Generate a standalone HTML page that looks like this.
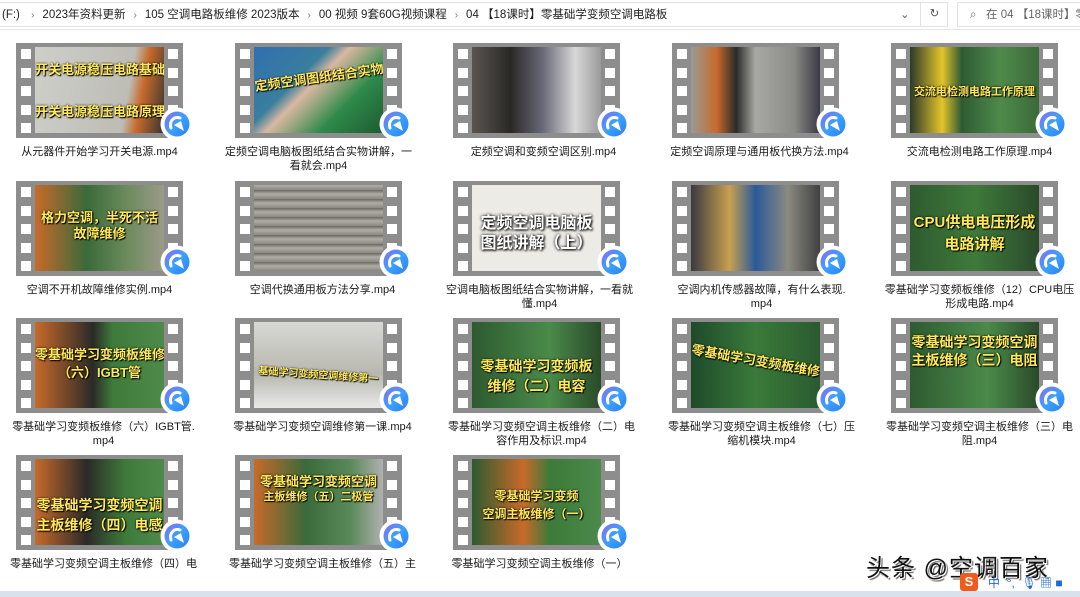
<!DOCTYPE html>
<html><head><meta charset="utf-8"><style>
*{margin:0;padding:0;box-sizing:border-box}
body{width:1080px;height:597px;background:#fff;position:relative;overflow:hidden;font-family:"Liberation Sans","Noto Sans CJK SC",sans-serif;color:#1a1a1a}
.bar{position:absolute;left:0;top:0;width:1080px;height:30px;background:#fff;border-bottom:1px solid #e5e5e5}
.addr{position:absolute;left:0;top:2px;width:948px;height:25px;border:1px solid #e3e3e3;border-left:none;font-size:11.5px;line-height:24px;white-space:nowrap;padding-left:2px;color:#222}
.addr i{font-style:normal;color:#777;margin:0 8px;font-size:10px}
.search{position:absolute;left:957px;top:2px;width:130px;height:25px;border:1px solid #e3e3e3;font-size:11.5px;line-height:24px;color:#666;padding-left:12px;white-space:nowrap;overflow:hidden}
.it{position:absolute;width:167px;height:95px}
.film{position:absolute;left:0;top:0;width:167px;height:95px;background:#8d8d8d}
.img{position:absolute;left:19px;top:4px;width:129px;height:86px;overflow:hidden}
.h{position:absolute;width:10px;height:10px;background:#fff}
.cap{position:absolute;left:0;width:100%;text-align:center;color:#ffe95a;font-weight:bold;font-size:13px;text-shadow:0 0 2px #000,1px 1px 1px #000;white-space:nowrap}
.ic{position:absolute;left:144px;top:64px;width:34px;height:34px}
.lb{position:absolute;width:219px;text-align:center;font-size:11px;line-height:14px;color:#1a1a1a}
.wm{position:absolute;left:866px;top:548px;font-size:24px;color:#111;text-shadow:1px 1px 0 #fff,2px 2px 1px #555;letter-spacing:1px}
.btm{position:absolute;left:0;top:591px;width:1080px;height:6px;background:#d8e1ec}
</style></head><body>
<div class="bar">
<div class="addr">(F:) <i>›</i>2023年资料更新<i>›</i>105 空调电路板维修 2023版本<i>›</i>00 视频 9套60G视频课程<i>›</i>04 【18课时】零基础学变频空调电路板<span style="position:absolute;left:900px;color:#666">⌄</span><span style="position:absolute;left:920px;top:-1px;width:28px;height:25px;border-left:1px solid #e3e3e3;text-align:center;color:#555">↻</span></div>
<div class="search">⌕ &nbsp; 在 04 【18课时】零</div>
</div>

<div class="it" style="left:16px;top:43px"><div class="film"></div><div class="img" style="background:linear-gradient(100deg,#cfcfca 0,#bdbdb6 70%,#c86a2a 80%,#333 100%)"><div class="cap" style="top:12px">开关电源稳压电路基础学习</div><div class="cap" style="top:54px">开关电源稳压电路原理</div></div></div>
<div class="it" style="left:235px;top:43px"><div class="film"></div><div class="img" style="background:linear-gradient(135deg,#2f6fb0 0,#3a7e9e 35%,#d9b8a0 45%,#2e8a4a 70%,#1e5a32 100%)"><div class="cap" style="top:20px;transform:rotate(-8deg)">定频空调图纸结合实物讲解</div></div></div>
<div class="it" style="left:453px;top:43px"><div class="film"></div><div class="img" style="background:linear-gradient(90deg,#5a5550 0,#2a2826 30%,#6a6a78 55%,#d8d8d8 80%,#9a9a9a 100%)"></div></div>
<div class="it" style="left:672px;top:43px"><div class="film"></div><div class="img" style="background:linear-gradient(90deg,#9a9a96 0,#c86a2a 20%,#2a2a2a 35%,#a8a8a4 50%,#8a8a86 80%,#3a3a44 100%)"></div></div>
<div class="it" style="left:891px;top:43px"><div class="film"></div><div class="img" style="background:linear-gradient(90deg,#2d3a2a 0,#e3c42a 25%,#2e5a34 40%,#4f8a4a 70%,#3a6a3a 100%)"><div class="cap" style="top:36px;font-size:11px">交流电检测电路工作原理</div></div></div>

<div class="it" style="left:16px;top:181px"><div class="film"></div><div class="img" style="background:linear-gradient(90deg,#c86a2a 0,#3a6a3a 40%,#6a8a5a 70%,#9a9a8a 100%)"><div class="cap" style="top:22px">格力空调，半死不活</div><div class="cap" style="top:38px">故障维修</div></div></div>
<div class="it" style="left:235px;top:181px"><div class="film"></div><div class="img" style="background:repeating-linear-gradient(0deg,#8a8680 0,#b0aca6 5px,#6a6660 9px)"></div></div>
<div class="it" style="left:453px;top:181px"><div class="film"></div><div class="img" style="background:#ecebe6"><div class="cap" style="top:24px;font-size:16px;color:#fff;text-shadow:0 0 3px #000,1px 1px 2px #000">定频空调电脑板</div><div class="cap" style="top:44px;font-size:16px;color:#fff;text-shadow:0 0 3px #000,1px 1px 2px #000">图纸讲解（上）</div></div></div>
<div class="it" style="left:672px;top:181px"><div class="film"></div><div class="img" style="background:linear-gradient(90deg,#3a3a40 0,#c8a050 30%,#2a5a9a 50%,#8a8a80 75%,#404040 100%)"></div></div>
<div class="it" style="left:891px;top:181px"><div class="film"></div><div class="img" style="background:linear-gradient(90deg,#2e5a30 0,#3e7a3a 50%,#2a4a2a 100%)"><div class="cap" style="top:26px;font-size:15px">CPU供电电压形成</div><div class="cap" style="top:48px;font-size:15px">电路讲解</div></div></div>

<div class="it" style="left:16px;top:318px"><div class="film"></div><div class="img" style="background:linear-gradient(90deg,#c86a2a 0,#2a2a28 45%,#3e7a3a 60%,#4e8a4a 100%)"><div class="cap" style="top:22px">零基础学习变频板维修</div><div class="cap" style="top:40px">（六）IGBT管</div></div></div>
<div class="it" style="left:235px;top:318px"><div class="film"></div><div class="img" style="background:linear-gradient(180deg,#d8d8d4 0,#b8b8b0 60%,#e8e8e8 100%)"><div class="cap" style="top:44px;font-size:10px;transform:rotate(4deg)">基础学习变频空调维修第一</div></div></div>
<div class="it" style="left:453px;top:318px"><div class="film"></div><div class="img" style="background:linear-gradient(90deg,#2e5a30 0,#4a8a4a 60%,#2a4a2a 100%)"><div class="cap" style="top:34px;font-size:14px">零基础学习变频板</div><div class="cap" style="top:54px;font-size:14px">维修（二）电容</div></div></div>
<div class="it" style="left:672px;top:318px"><div class="film"></div><div class="img" style="background:linear-gradient(90deg,#1e4a2a 0,#3a7a3a 50%,#2a5a30 100%)"><div class="cap" style="top:28px;transform:rotate(10deg)">零基础学习变频板维修（七）模块</div></div></div>
<div class="it" style="left:891px;top:318px"><div class="film"></div><div class="img" style="background:linear-gradient(90deg,#2e5a30 0,#4a8a4a 60%,#2a4a2a 100%)"><div class="cap" style="top:10px;font-size:14px">零基础学习变频空调</div><div class="cap" style="top:28px;font-size:14px">主板维修（三）电阻</div></div></div>

<div class="it" style="left:16px;top:455px"><div class="film"></div><div class="img" style="background:linear-gradient(90deg,#c86a2a 0,#2a2a28 40%,#3e7a3a 70%,#4e8a4a 100%)"><div class="cap" style="top:36px;font-size:14px">零基础学习变频空调</div><div class="cap" style="top:56px;font-size:14px">主板维修（四）电感</div></div></div>
<div class="it" style="left:235px;top:455px"><div class="film"></div><div class="img" style="background:linear-gradient(90deg,#c86a2a 0,#3a6a3a 40%,#5a8a5a 75%,#b0b0b0 100%)"><div class="cap" style="top:12px;font-size:13px">零基础学习变频空调</div><div class="cap" style="top:29px;font-size:11px">主板维修（五）二极管</div></div></div>
<div class="it" style="left:453px;top:455px"><div class="film"></div><div class="img" style="background:linear-gradient(90deg,#2e5a30 0,#c86a2a 40%,#3e7a3a 60%,#4a8a4a 100%)"><div class="cap" style="top:28px;font-size:12px">零基础学习变频</div><div class="cap" style="top:46px;font-size:12px">空调主板维修（一）</div></div></div>

<div class="lb" style="left:-10px;top:145px">从元器件开始学习开关电源.mp4</div>
<div class="lb" style="left:209px;top:145px">定频空调电脑板图纸结合实物讲解，一<br>看就会.mp4</div>
<div class="lb" style="left:434px;top:145px">定频空调和变频空调区别.mp4</div>
<div class="lb" style="left:650px;top:145px">定频空调原理与通用板代换方法.mp4</div>
<div class="lb" style="left:870px;top:145px">交流电检测电路工作原理.mp4</div>

<div class="lb" style="left:-10px;top:283px">空调不开机故障维修实例.mp4</div>
<div class="lb" style="left:213px;top:283px">空调代换通用板方法分享.mp4</div>
<div class="lb" style="left:430px;top:283px">空调电脑板图纸结合实物讲解，一看就<br>懂.mp4</div>
<div class="lb" style="left:652px;top:283px">空调内机传感器故障，有什么表现.<br>mp4</div>
<div class="lb" style="left:870px;top:283px">零基础学习变频板维修（12）CPU电压<br>形成电路.mp4</div>

<div class="lb" style="left:-6px;top:420px">零基础学习变频板维修（六）IGBT管.<br>mp4</div>
<div class="lb" style="left:213px;top:420px">零基础学习变频空调维修第一课.mp4</div>
<div class="lb" style="left:432px;top:420px">零基础学习变频空调主板维修（二）电<br>容作用及标识.mp4</div>
<div class="lb" style="left:652px;top:420px">零基础学习变频空调主板维修（七）压<br>缩机模块.mp4</div>
<div class="lb" style="left:870px;top:420px">零基础学习变频空调主板维修（三）电<br>阻.mp4</div>

<div class="lb" style="left:-6px;top:557px">零基础学习变频空调主板维修（四）电</div>
<div class="lb" style="left:213px;top:557px">零基础学习变频空调主板维修（五）主</div>
<div class="lb" style="left:430px;top:557px">零基础学习变频空调主板维修（一）</div>

<div class="wm">头条 @空调百家</div>
<div style="position:absolute;left:960px;top:573px;width:18px;height:18px;background:#f05a1a;border-radius:3px;color:#fff;font-size:13px;font-weight:bold;text-align:center;line-height:18px">S</div>
<div style="position:absolute;left:988px;top:574px;font-size:12px;color:#1a6ad8;white-space:nowrap">中 &nbsp;°, &nbsp;🎙 ▦ ■</div>
<div class="btm"></div>

<script>
var svg='<svg width="34" height="34" viewBox="0 0 34 34"><defs><linearGradient id="g" x1="0" y1="0" x2="1" y2="1"><stop offset="0" stop-color="#8a6cf0"/><stop offset="0.5" stop-color="#3aa0ff"/><stop offset="1" stop-color="#2b7ff0"/></linearGradient></defs><circle cx="17" cy="17" r="16.5" fill="#fff"/><circle cx="17" cy="17" r="12.5" fill="url(#g)"/><path d="M11 21 C9 14 14 9 20 11" fill="none" stroke="#fff" stroke-width="3" stroke-linecap="round"/><path d="M14 18 L24 24 L21 14 Z" fill="#fff"/></svg>';
document.querySelectorAll('.film').forEach(f=>{
 for(let i=0;i<5;i++){
  [5,152].forEach(x=>{const h=document.createElement('div');h.className='h';h.style.left=x+'px';h.style.top=(6+i*18.5)+'px';f.appendChild(h);});
 }
 const c=document.createElement('div');c.className='ic';c.innerHTML=svg;f.parentNode.appendChild(c);
});
</script>
</body></html>
